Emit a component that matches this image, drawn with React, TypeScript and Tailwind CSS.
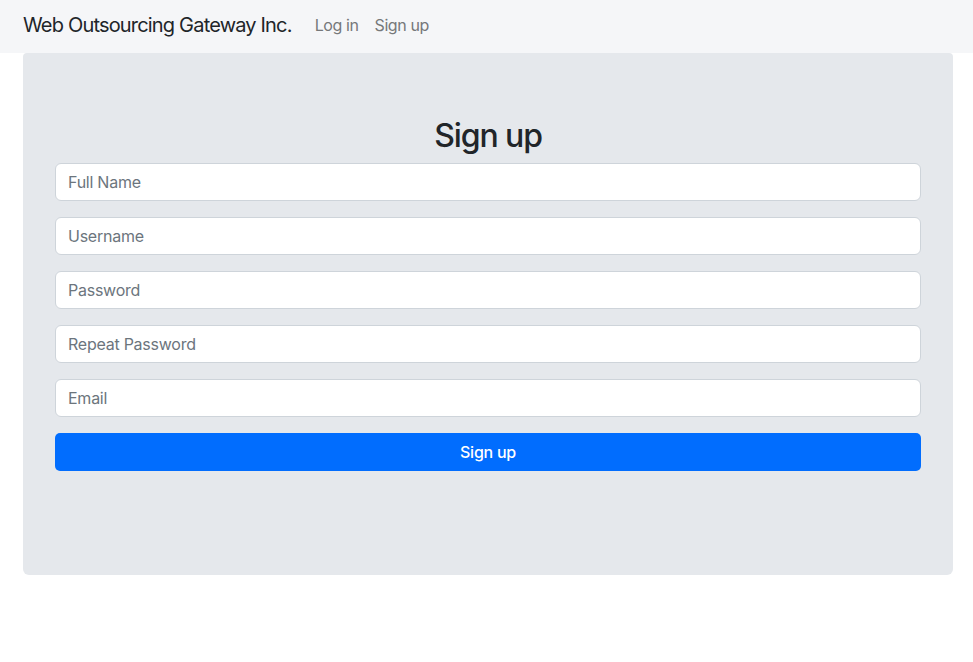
import React from "react";

export default function App() {
  const fields = ["Full Name", "Username", "Password", "Repeat Password", "Email"];
  return (
    <div className="min-h-[662px] bg-white text-[#212529]" style={{ fontFamily: "Inter, 'Liberation Sans', sans-serif" }}>
      <nav className="h-[53px] bg-[#f5f6f8] flex items-center pl-[23px] pb-[4px]">
        <span className="text-[20px] text-[#212529] mr-[23px] tracking-[-0.82px]">Web Outsourcing Gateway Inc.</span>
        <span className="text-[16px] text-[#76787a] mr-[16px] tracking-[-0.4px]">Log in</span>
        <span className="text-[16px] text-[#76787a] tracking-[-0.4px]">Sign up</span>
      </nav>
      <div className="mx-[23px] w-[930px] bg-[#e5e8ec] rounded-b-[6px] rounded-t-[4px] px-[32px] pt-[64px] pb-[104px]">
        <h2 className="text-center text-[32px] font-medium leading-[38px] mb-[8px] tracking-[-1.1px]">Sign up</h2>
        <form className="flex flex-col gap-[16px]">
          {fields.map((f) => (
            <input
              key={f}
              type={f.toLowerCase().includes("password") ? "password" : "text"}
              placeholder={f}
              className="h-[38px] w-full bg-white border border-[#ced4da] rounded-[6px] px-[12px] text-[16px] tracking-[-0.25px] placeholder:text-[#6c757d] outline-none"
            />
          ))}
          <button type="button" className="h-[38px] w-full bg-[#016dfe] text-white text-[16px] tracking-[-0.25px] font-medium rounded-[5px]">
            Sign up
          </button>
        </form>
      </div>
    </div>
  );
}
